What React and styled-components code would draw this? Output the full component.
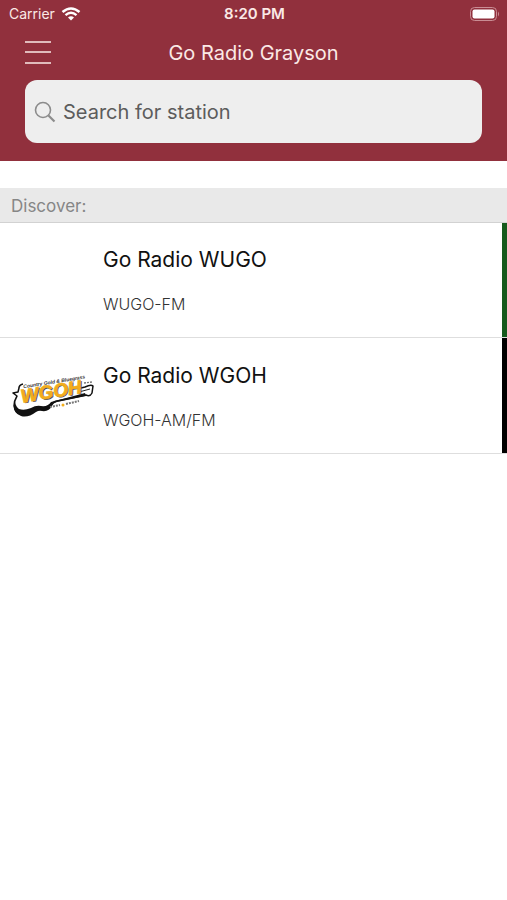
import React, { useState } from "react";
import styled, { createGlobalStyle } from "styled-components";

const GlobalStyle = createGlobalStyle`
  * {
    box-sizing: border-box;
  }

  body {
    margin: 0;
    background: #fff;
    font-family: Inter, "Liberation Sans", sans-serif;
  }
`;

const Header = styled.header`
  padding-bottom: 18px;
  background: #91303d;
  color: #fbe9e6;
`;

const StatusBar = styled.div`
  display: grid;
  grid-template-columns: 1fr auto 1fr;
  align-items: center;
  height: 28px;
  padding: 0 7px 0 9px;
  font-size: 14px;
  line-height: 20px;
`;

const Carrier = styled.div`
  display: flex;
  align-items: center;
  gap: 6px;
`;

const Time = styled.time`
  font-size: 15px;
  font-weight: 600;
`;

const Battery = styled.svg`
  justify-self: end;
`;

const NavBar = styled.nav`
  display: grid;
  grid-template-columns: 28px 1fr 28px;
  align-items: center;
  height: 52px;
  padding: 0 24px 2px;
`;

const MenuButton = styled.button`
  display: flex;
  padding: 0;
  border: 0;
  background: none;
  color: inherit;
  cursor: pointer;
`;

const Title = styled.h1`
  margin: 0;
  font-size: 20px;
  font-weight: 400;
  line-height: 26px;
  text-align: center;
`;

const SearchBox = styled.label`
  display: flex;
  align-items: center;
  gap: 7px;
  height: 63px;
  margin: 0 25px;
  padding: 0 9px;
  border-radius: 12px;
  background: #eee;
  color: #8c8c8c;
`;

const SearchInput = styled.input`
  flex: 1;
  min-width: 0;
  padding: 0;
  border: 0;
  outline: 0;
  background: none;
  color: #555;
  font-family: inherit;
  font-size: 20px;
  line-height: 24px;

  &::placeholder {
    color: #5c5c5c;
    opacity: 1;
  }
`;

const SectionTitle = styled.h2`
  position: relative;
  height: 34px;
  margin: 27px 0 0;
  padding: 0 11px;
  background: #e9e9e9;
  box-shadow: 0 1px 0 #d2d2d2;
  color: #868686;
  font-size: 17px;
  font-weight: 400;
  line-height: 36px;
`;

const StationList = styled.ul`
  margin: 0;
  padding: 0;
  list-style: none;
`;

const StationItem = styled.li`
  border-bottom: 1px solid #dedede;
`;

const StationLink = styled.a`
  display: grid;
  grid-template-columns: 84px 1fr;
  gap: 8px;
  align-items: center;
  height: 115px;
  padding: 4px 0 0 11px;
  border-right: 5px solid ${(props) => props.$accent};
  color: #111;
  text-decoration: none;
`;

const StationText = styled.div`
  grid-column: 2;
`;

const StationName = styled.h3`
  margin: 0 0 19px;
  font-size: 21px;
  font-weight: 400;
  line-height: 26px;
`;

const CallSign = styled.p`
  margin: 0;
  color: #333;
  font-size: 16px;
  font-weight: 300;
  line-height: 24px;
`;

const LogoImage = styled.svg`
  overflow: visible;
`;

const LogoText = styled.text`
  font-family: "Liberation Sans", sans-serif;
  font-style: italic;
  font-weight: 700;
`;

function WgohLogo() {
  return (
    <LogoImage width="84" height="56" viewBox="0 -5 84 56" role="img" aria-label="WGOH">
      <path
        d="M12 9Q8 10 8 13L7 17L2 18L6 21Q3 26 3 31Q4 39 13 40Q20 39 26 34Q29 32 32 34Q38 35 41 29Q42 27 46 26L75 20Q79 22 81 18L82 11Q80 9 74 12L70 13"
        fill="#fff"
        stroke="#111"
        strokeWidth="1.5"
        strokeLinejoin="round"
      />
      <path
        d="M4 27Q5 32 8 34Q13 36 20 33Q25 30 30 31Q37 32 40 27L74 18L75 21L46 27Q42 28 41 31Q38 37 31 36Q28 35 25 37Q17 43 10 41Q2 38 3 30Z"
        fill="#111"
      />
      <path d="M68 17L79 14" stroke="#222" strokeWidth="1" />
      <g transform="rotate(-9 40 20)">
        <LogoText x="14" y="9" fontSize="5" fill="#333">
          Country Gold &amp; Bluegrass
        </LogoText>
        <LogoText x="11" y="24" fontSize="19" fill="#555" aria-hidden="true">
          WGOH
        </LogoText>
        <LogoText x="10" y="23" fontSize="19" fill="#f2ad1c" stroke="#f2ad1c" strokeWidth="0.6">
          WGOH
        </LogoText>
      </g>
      <path d="M39 32L49 30M55 29L68 26" stroke="#777" strokeWidth="2" strokeDasharray="2 1" />
      <circle cx="52" cy="30" r="1.5" fill="#f2ad1c" />
      <path d="M73 8L81 7" stroke="#777" strokeWidth="1.5" strokeDasharray="2 1" />
    </LogoImage>
  );
}

const stations = [
  { name: "Go Radio WUGO", callSign: "WUGO-FM", accent: "#165a1c" },
  { name: "Go Radio WGOH", callSign: "WGOH-AM/FM", accent: "#000", Logo: WgohLogo },
];

function App() {
  const [query, setQuery] = useState("");

  const visible = stations.filter((station) =>
    station.name.toLowerCase().includes(query.toLowerCase())
  );

  return (
    <>
      <GlobalStyle />
      <Header>
        <StatusBar>
          <Carrier>
            Carrier
            <svg width="20" height="14" viewBox="0 0 20 14" fill="none" stroke="#fff" aria-hidden="true">
              <path d="M1.500 5Q10-2 18.500 5" strokeWidth="2.6" />
              <path d="M4.500 8.200Q10 3.400 15.500 8.200" strokeWidth="2.4" />
              <path d="M7 10.500Q10 8 13 10.500L10 13.500Z" fill="#fff" stroke="none" />
            </svg>
          </Carrier>
          <Time>8:20 PM</Time>
          <Battery width="30" height="14" viewBox="0 0 30 14" aria-hidden="true">
            <rect x="0.5" y="0.5" width="26" height="13" rx="4" fill="none" stroke="#c98d94" />
            <rect x="2.500" y="2.500" width="22" height="9" rx="2" fill="#fff" />
            <path d="M28 4.500Q30 7 28 9.500Z" fill="#c98d94" />
          </Battery>
        </StatusBar>
        <NavBar>
          <MenuButton type="button" aria-label="Menu">
            <svg width="28" height="24" viewBox="0 0 28 24" stroke="currentColor" strokeWidth="1.5">
              <path d="M1 1H27M1 11H27M1 22H27" />
            </svg>
          </MenuButton>
          <Title>Go Radio Grayson</Title>
        </NavBar>
        <SearchBox>
          <svg width="22" height="22" viewBox="0 0 22 22" fill="none" stroke="currentColor" aria-hidden="true">
            <circle cx="9" cy="9" r="7.500" strokeWidth="1.6" />
            <path d="M14.500 14.500L20.500 20.500" strokeWidth="2.2" />
          </svg>
          <SearchInput
            type="text"
            aria-label="Search for station"
            placeholder="Search for station"
            value={query}
            onChange={(e) => setQuery(e.target.value)}
          />
        </SearchBox>
      </Header>
      <main>
        <SectionTitle>Discover:</SectionTitle>
        <StationList>
          {visible.map(({ name, callSign, accent, Logo }) => (
            <StationItem key={name}>
              <StationLink href="#" $accent={accent}>
                {Logo && <Logo />}
                <StationText>
                  <StationName>{name}</StationName>
                  <CallSign>{callSign}</CallSign>
                </StationText>
              </StationLink>
            </StationItem>
          ))}
        </StationList>
      </main>
    </>
  );
}

export default App;
